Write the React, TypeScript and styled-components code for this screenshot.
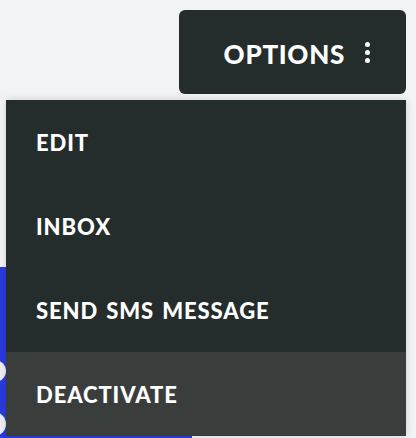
import React, { useState } from "react";
import styled, { createGlobalStyle } from "styled-components";

const GlobalStyle = createGlobalStyle`
  html, body {
    margin: 0;
    padding: 0;
    background: #f2f3f5;
  }
  body {
    font-family: "Lato", "Liberation Sans", sans-serif;
  }
`;

const items = ["Edit", "Inbox", "Send SMS message", "Deactivate"];

const App = () => {
  const [active, setActive] = useState(3);

  return (
    <>
      <GlobalStyle />
      <Page>
        <Header>
          <OptionsButton type="button">
            <ButtonLabel>Options</ButtonLabel>
            <Kebab>
              <Dot />
              <Dot />
              <Dot />
            </Kebab>
          </OptionsButton>
        </Header>
        <Backdrop>
          <BlueCard>
            <Notch $top={93} $size={22} />
            <Notch $top={145} $size={24} />
          </BlueCard>
        </Backdrop>
        <Menu>
          {items.map((label, i) => (
            <MenuItem
              key={label}
              $active={i === active}
              onMouseEnter={() => setActive(i)}
            >
              {label}
            </MenuItem>
          ))}
        </Menu>
      </Page>
    </>
  );
};

export default App;

const Page = styled.div`
  position: relative;
  width: 416px;
  height: 438px;
  overflow: hidden;
`;

const Header = styled.div`
  display: flex;
  justify-content: flex-end;
  padding: 10px 10px 0 0;
`;

const OptionsButton = styled.button`
  display: flex;
  align-items: center;
  justify-content: flex-end;
  gap: 20px;
  width: 227px;
  height: 84px;
  padding: 3px 36px 0 0;
  border: none;
  border-radius: 6px;
  background: #252c2c;
  color: #fff;
  cursor: pointer;
`;

const ButtonLabel = styled.span`
  font-family: "Lato", sans-serif;
  font-weight: 900;
  font-size: 26px;
  letter-spacing: 0.7px;
  text-transform: uppercase;
`;

const Kebab = styled.span`
  display: flex;
  flex-direction: column;
  gap: 3px;
  margin-top: -2px;
`;

const Dot = styled.span`
  width: 5px;
  height: 5px;
  border-radius: 50%;
  background: #fff;
`;

const Backdrop = styled.div`
  position: absolute;
  left: 0;
  top: 267px;
`;

const BlueCard = styled.div`
  position: relative;
  width: 192px;
  height: 171px;
  background: #2b3ae0;
  overflow: hidden;
`;

const Notch = styled.span<{ $top: number; $size: number }>`
  position: absolute;
  left: ${(p) => 6 - p.$size}px;
  top: ${(p) => p.$top}px;
  width: ${(p) => p.$size}px;
  height: ${(p) => p.$size}px;
  border-radius: 50%;
  background: #eef0f3;
`;

const Menu = styled.ul`
  position: absolute;
  left: 6px;
  top: 100px;
  width: 400px;
  margin: 0;
  padding: 0;
  list-style: none;
  background: #252c2c;
  box-shadow: 0 0 8px rgba(0, 0, 0, 0.15);
`;

const MenuItem = styled.li<{ $active: boolean }>`
  display: flex;
  align-items: center;
  height: 84px;
  padding: 0 30px;
  background: ${(p) => (p.$active ? "#393e3c" : "transparent")};
  color: #fff;
  font-weight: 900;
  font-size: 22px;
  letter-spacing: 0.9px;
  word-spacing: 2px;
  text-transform: uppercase;
  cursor: pointer;
`;
